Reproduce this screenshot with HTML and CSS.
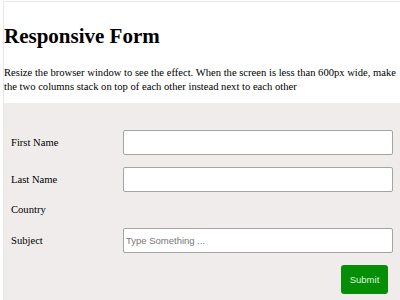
FILE: index.html
```html
<!DOCTYPE html>
<html>
<head>
<meta charset="utf-8">
<link rel="stylesheet" href="styles.css">
</head>
<body>
<div class="frame">
  <h1 class="title">Responsive Form</h1>
  <p class="intro">Resize the browser window to see the effect. When the screen is less than 600px wide, make the two columns stack on top of each other instead next to each other</p>
  <div class="container">
    <form class="form">
      <label class="label" for="fname">First Name</label>
      <input class="field" id="fname" type="text">
      <label class="label" for="lname">Last Name</label>
      <input class="field" id="lname" type="text">
      <label class="label label-solo">Country</label>
      <label class="label" for="subject">Subject</label>
      <input class="field" id="subject" type="text" placeholder="Type Something ...">
      <div class="actions"><button class="submit" type="button">Submit</button></div>
    </form>
  </div>
</div>
</body>
</html>
```
FILE: styles.css
```css
html, body {
  margin: 0;
  padding: 0;
  height: 100%;
  background: #ffffff;
  overflow: hidden;
}
body {
  font-family: "Liberation Serif", "Times New Roman", serif;
  color: #000;
}
.frame {
  box-sizing: border-box;
  margin: 1px 0 0 3px;
  height: calc(100% - 1px);
  border-top: 1px solid #e8e8e8;
  border-left: 1px solid #e8e8e8;
  display: flex;
  flex-direction: column;
}
.title {
  margin: 22px 0 0 0;
  font-size: 21px;
  line-height: 24px;
  font-weight: bold;
}
.intro {
  margin: 18px 0 0 0;
  font-size: 10.6px;
  line-height: 14px;
}
.container {
  flex: 1;
  min-height: 0;
  margin-top: 9px;
  background: #f0ecec;
  padding: 27px 0 0 7px;
}
.form {
  display: grid;
  grid-template-columns: 112px 270px;
  row-gap: 12px;
  align-items: center;
}
.label {
  font-size: 10.6px;
  line-height: 12px;
}
.label-solo {
  grid-column: 1 / 3;
}
.field {
  box-sizing: border-box;
  height: 25px;
  width: 270px;
  margin: 0;
  padding: 0 2px;
  border: 1px solid #a4a4a4;
  border-radius: 2px;
  background: #fff;
  font-family: "Liberation Sans", Arial, sans-serif;
  font-size: 9.5px;
  outline: none;
}
.field::placeholder {
  color: #777;
}
.actions {
  grid-column: 1 / 3;
  display: flex;
  justify-content: flex-end;
  padding-right: 5px;
}
.submit {
  width: 47px;
  height: 29px;
  background: #078e07;
  color: #dcf5dc;
  border: none;
  border-radius: 3px;
  font-family: "Liberation Sans", Arial, sans-serif;
  font-size: 9.5px;
  padding: 0;
}
```
